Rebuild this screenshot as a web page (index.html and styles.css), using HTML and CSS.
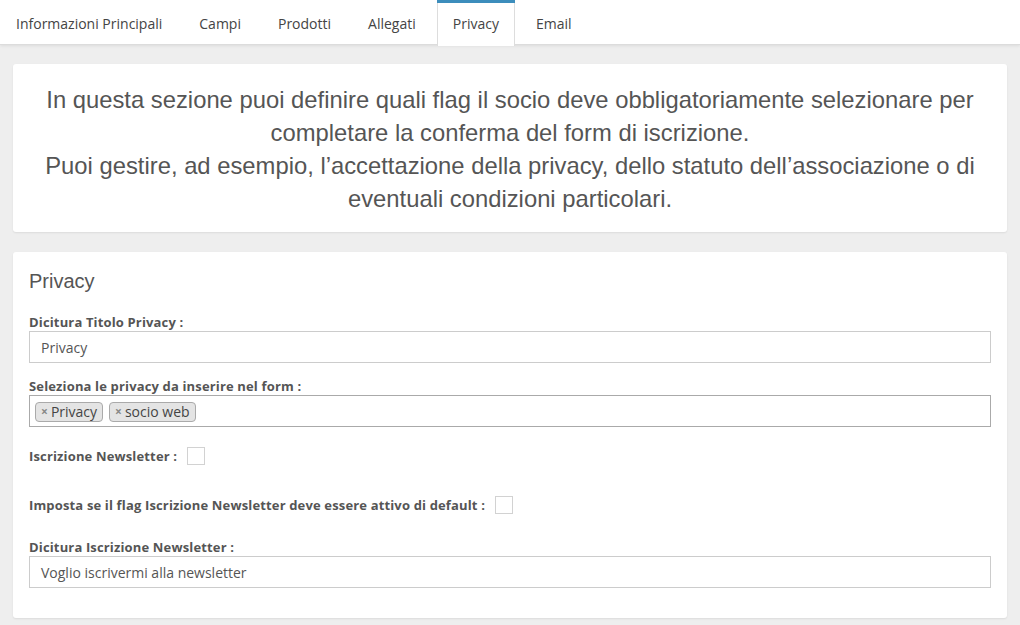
FILE: index.html
```html
<!DOCTYPE html>
<html lang="it">
<head>
<meta charset="utf-8">
<title>Privacy</title>
<link rel="stylesheet" href="styles.css">
</head>
<body>
<nav class="tabbar">
  <ul class="tabs">
    <li class="tab"><a>Informazioni Principali</a></li>
    <li class="tab"><a>Campi</a></li>
    <li class="tab"><a>Prodotti</a></li>
    <li class="tab"><a>Allegati</a></li>
    <li class="tab active"><a>Privacy</a></li>
    <li class="tab"><a>Email</a></li>
  </ul>
</nav>
<main class="content">
  <section class="card intro">
    <p>In questa sezione puoi definire quali flag il socio deve obbligatoriamente selezionare per completare la conferma del form di iscrizione.<br>Puoi gestire, ad esempio, l’accettazione della privacy, dello statuto dell’associazione o di eventuali condizioni particolari.</p>
  </section>
  <section class="card form">
    <h3 class="card-title">Privacy</h3>
    <div class="group">
      <label class="lbl">Dicitura Titolo Privacy :</label>
      <div class="input">Privacy</div>
    </div>
    <div class="group">
      <label class="lbl">Seleziona le privacy da inserire nel form :</label>
      <div class="input multi">
        <span class="tag"><span class="x">×</span>Privacy</span>
        <span class="tag"><span class="x">×</span>socio web</span>
      </div>
    </div>
    <div class="check-row first">
      <label class="lbl">Iscrizione Newsletter :</label>
      <span class="box"></span>
    </div>
    <div class="check-row second">
      <label class="lbl">Imposta se il flag Iscrizione Newsletter deve essere attivo di default :</label>
      <span class="box"></span>
    </div>
    <div class="group last">
      <label class="lbl">Dicitura Iscrizione Newsletter :</label>
      <div class="input">Voglio iscrivermi alla newsletter</div>
    </div>
  </section>
</main>
</body>
</html>
```
FILE: styles.css
```css
* { box-sizing: border-box; }
html, body { margin: 0; padding: 0; }
body {
  background: #eeeeee;
  font-family: "Open Sans", "Liberation Sans", sans-serif;
  color: #444;
  width: 1020px;
  height: 625px;
  overflow: hidden;
}
.tabbar {
  background: #fff;
  border-bottom: 1px solid #dcdcdc;
  box-shadow: 0 1px 3px rgba(0,0,0,0.08);
  height: 45px;
}
.tabs {
  list-style: none;
  margin: 0;
  padding: 0;
  display: flex;
  height: 45px;
}
.tab {
  margin-right: 5px;
  border-top: 3px solid transparent;
}
.tab a {
  display: block;
  padding: 11px 15px 10px 15px;
  line-height: 20px;
  font-size: 14px;
  color: #444;
  border-left: 1px solid transparent;
  border-right: 1px solid transparent;
}
.tab:first-child a { border-left: 0; padding-left: 16px; }
.tab.active {
  border-top-color: #3c8dbc;
}
.tab.active a {
  background: #fff;
  border-left-color: #ddd;
  border-right-color: #ddd;
  height: 43px;
}
.content {
  padding: 19px 13px 0;
}
.card {
  background: #fff;
  border-radius: 3px;
  box-shadow: 0 1px 2px rgba(0,0,0,0.08);
}
.intro {
  padding: 19px 20px 17px;
  margin-bottom: 20px;
}
.intro p {
  margin: 0;
  text-align: center;
  font-family: "Liberation Sans", Arial, sans-serif;
  font-size: 23.8px;
  line-height: 33px;
  color: #555;
}
.form {
  padding: 16px 16px 30px;
}
.card-title {
  margin: 0 0 20px;
  font-family: "Liberation Sans", Arial, sans-serif;
  font-weight: normal;
  font-size: 20px;
  line-height: 26px;
  color: #555;
}
.lbl {
  display: block;
  font-size: 13px;
  font-weight: 700;
  letter-spacing: 0.15px;
  line-height: 17px;
  color: #555;
}
.group { margin-bottom: 15px; }
.group.last { margin-bottom: 0; }
.input {
  height: 32px;
  border: 1px solid #ccc;
  padding: 1px 11px 0;
  font-size: 14px;
  line-height: 29px;
  color: #555;
}
.input.multi {
  border-color: #aaa;
  padding: 1px 5px 0;
  display: flex;
  align-items: center;
  gap: 6px;
}
.tag {
  display: inline-flex;
  align-items: center;
  height: 20px;
  border: 1px solid #aaa;
  border-radius: 4px;
  background: #e4e4e4;
  padding: 0 5px;
  font-size: 14px;
  line-height: 18px;
  color: #444;
}
.tag .x {
  color: #888;
  font-size: 12px;
  font-weight: 700;
  margin-right: 3px;
}
.check-row {
  display: flex;
  align-items: center;
  gap: 10px;
  height: 18px;
}
.check-row.first { margin-top: 20px; margin-bottom: 31px; }
.check-row.second { margin-bottom: 25px; }
.box {
  width: 18px;
  height: 18px;
  border: 1px solid #d2d2d2;
  background: #fff;
}
```
